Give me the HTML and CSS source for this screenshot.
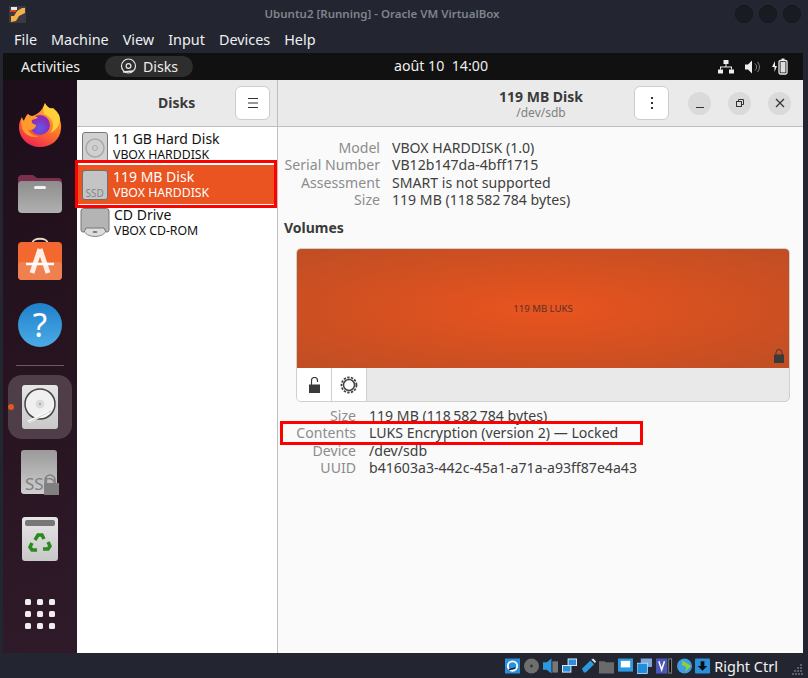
FILE: index.html
```html
<!DOCTYPE html>
<html lang="fr">
<head>
<meta charset="utf-8">
<title>Ubuntu2 [Running] - Oracle VM VirtualBox</title>
<link rel="stylesheet" href="styles.css">
</head>
<body>
<div class="vbox">
  <header class="titlebar">
    <svg class="vbox-logo" width="17" height="17" viewBox="0 0 17 17"><rect width="17" height="17" fill="#3a3a40"/><path d="M2 16l5-1 3-5 6-3V2h-3L8 5 5 10H2z" fill="#f4b04a"/><path d="M2 1h6v3H2z" fill="#e8e8e8"/><path d="M1 4h6v2H1z" fill="#d8401c"/></svg>
    <div class="titletext">Ubuntu2 [Running] - Oracle VM VirtualBox</div>
    <div class="wm"><i></i><i></i><i></i></div>
  </header>
  <nav class="menubar"><span>File</span><span>Machine</span><span>View</span><span>Input</span><span>Devices</span><span>Help</span></nav>

  <div class="guest">
    <div class="panel">
      <div class="panel-left">
        <span class="activities">Activities</span>
        <span class="pill">
          <svg width="17" height="17" viewBox="0 0 17 17" fill="none" stroke="#e8e8e8"><circle cx="8.500" cy="8" r="7" stroke-width="1.200"/><circle cx="8.500" cy="8" r="2.400" stroke-width="1.200"/><path d="M3 14l10-1" stroke-width="1.500"/></svg>
          Disks
        </span>
      </div>
      <div class="clock">août 10&nbsp;&nbsp;14:00</div>
      <div class="tray">
        <svg width="16" height="14" viewBox="0 0 16 14" fill="#eee"><rect x="5.500" y="0" width="5" height="4"/><rect x="0" y="9.500" width="5" height="4"/><rect x="11" y="9.500" width="5" height="4"/><path d="M7.500 4h1v2.500h5.500v3h-1v-2H3v2H2v-3h5.500z"/></svg>
        <svg width="16" height="14" viewBox="0 0 16 14" fill="#eee"><path d="M0 4.500h3l4-4v13l-4-4H0z"/><path d="M10 3.500c2 2 2 5 0 7M12.500 2c2.500 3 2.500 7 0 10" fill="none" stroke="#888" stroke-width="1"/></svg>
        <svg width="16" height="17" viewBox="0 0 16 17"><path d="M3 3L0 9h2.500v5L5 8H3z" fill="#eee"/><rect x="7" y="2.500" width="8" height="13.500" rx="1.500" fill="none" stroke="#eee" stroke-width="1.300"/><rect x="9.500" y="0.500" width="3" height="2" fill="#eee"/><rect x="8.500" y="4" width="5" height="10.500" fill="#ddd"/></svg>
      </div>
    </div>

    <div class="desktop">
      <aside class="dock">
        <div class="dock-item">
          <svg width="46" height="46" viewBox="0 0 46 46"><defs><linearGradient id="ff" x1="0.800" y1="0" x2="0.300" y2="1"><stop offset="0" stop-color="#ffb52e"/><stop offset="0.500" stop-color="#ff7a2a"/><stop offset="1" stop-color="#f0244f"/></linearGradient><radialGradient id="fp" cx="0.500" cy="0.650"><stop offset="0" stop-color="#5f5be8"/><stop offset="1" stop-color="#8c2bb8"/></radialGradient></defs><path d="M28 1c-1 4 0 7 3 10l5-2c6 5 9 11 8 18-1 11-10 18-21 18S2 37 2 25c0-3 1-7 3-10 0 2 1 3 2 4 1-3 2-5 4-7 1 1 2 2 4 2 4-1 10-4 13-13z" fill="url(#ff)"/><path d="M28 1c-2 4-2 7-1 11 5 2 9 6 9 11 0 3-1 6-3 8 6-2 10-8 10-14 0-4-3-8-7-11-3 1-6-1-8-5z" fill="#ffd03a"/><circle cx="23" cy="23" r="10" fill="url(#fp)"/><path d="M5 15c0 2 1 3 2 4 1-3 2-5 4-7 1 1 2 2 4 2 2 0 4 0 6 2l-6 2c-1 3 1 4 4 5 0 3-4 6-8 5 3 4 6 6 11 6-8 3-15-2-17-8-1-4-1-8 0-11z" fill="#ff9a2c"/></svg>
        </div>
        <div class="dock-item">
          <svg width="46" height="42" viewBox="0 0 46 42"><defs><linearGradient id="fold" x1="0" y1="0" x2="0" y2="1"><stop offset="0" stop-color="#8d8d8d"/><stop offset="1" stop-color="#b0b0b0"/></linearGradient></defs><path d="M1 8q0-4 4-4h11l4 3h21q4 0 4 4v8H1z" fill="#7c2f4d"/><rect x="1" y="10" width="44" height="32" rx="4" fill="url(#fold)"/><rect x="17" y="15" width="12" height="3" rx="1.500" fill="#f2f2f2"/></svg>
        </div>
        <div class="dock-item">
          <svg width="46" height="44" viewBox="0 0 46 44"><path d="M15 8C15 1 31 1 31 8" fill="none" stroke="#e9d9c0" stroke-width="2"/><rect x="1" y="6" width="44" height="38" rx="4" fill="#f2682e"/><rect x="1" y="26" width="44" height="18" fill="#ef8150" rx="4"/><path d="M23 13l-8 24M23 13l8 24" stroke="#fdeee6" stroke-width="5" fill="none"/><path d="M9 28h28" stroke="#fff" stroke-width="2.500"/></svg>
        </div>
        <div class="dock-item">
          <div class="help">?</div>
        </div>
        <div class="dock-sep"></div>
        <div class="dock-item active">
          <span class="run-dot"></span>
          <svg width="36" height="44" viewBox="0 0 36 44"><defs><linearGradient id="hd" x1="0" y1="0" x2="0" y2="1"><stop offset="0" stop-color="#e6e6e6"/><stop offset="1" stop-color="#c8c8c8"/></linearGradient></defs><rect width="36" height="44" rx="3" fill="url(#hd)"/><circle cx="18" cy="19" r="15" fill="#f0f0f0" stroke="#444" stroke-width="1.500"/><circle cx="18" cy="19" r="4.500" fill="#dcdcdc"/><circle cx="18" cy="19" r="1.200" fill="#aaa"/><path d="M6 37l21-10" stroke="#fff" stroke-width="2.500"/><path d="M5 38l24-12" stroke="#999" stroke-width="0.500"/></svg>
        </div>
        <div class="dock-item">
          <svg width="38" height="45" viewBox="0 0 38 45"><defs><linearGradient id="ssd" x1="0" y1="0" x2="0" y2="1"><stop offset="0" stop-color="#9a9a9a"/><stop offset="1" stop-color="#cfcfcf"/></linearGradient></defs><rect width="36" height="44" rx="3" fill="url(#ssd)"/><text x="4" y="40" class="ssd-big">SSD</text><path d="M24 33v-3a5 5 0 0 1 10 0v3" fill="none" stroke="#808080" stroke-width="1.500"/><rect x="23" y="33" width="15" height="12" fill="#808080"/></svg>
        </div>
        <div class="dock-item">
          <svg width="36" height="44" viewBox="0 0 36 44"><rect width="36" height="44" rx="3" fill="url(#hd)"/><rect x="3" y="3" width="30" height="6" rx="2" fill="#777"/><g fill="none" stroke="#2a8a1e" stroke-width="3.500"><path d="M13 23l3-5h4l2 4"/><path d="M26 25l2 4-2 3h-5"/><path d="M15 33h-5l-2-3 2-4"/></g></svg>
        </div>
        <div class="dock-grid"><i></i><i></i><i></i><i></i><i></i><i></i><i></i><i></i><i></i></div>
      </aside>

      <div class="window">
        <header class="headerbar">
          <div class="head-left">
            <div class="head-title">Disks</div>
            <button class="hbtn" type="button"><svg width="12" height="10" viewBox="0 0 12 10" stroke="#333"><path d="M1 .5h10M1 5h10M1 9.500h10"/></svg></button>
          </div>
          <div class="head-right">
            <div class="head-center"><div class="head-title">119 MB Disk</div><div class="head-sub">/dev/sdb</div></div>
            <button class="hbtn" type="button"><svg width="4" height="12" viewBox="0 0 4 12" fill="#333"><rect x="1" y="0" width="2" height="2"/><rect x="1" y="5" width="2" height="2"/><rect x="1" y="10" width="2" height="2"/></svg></button>
            <div class="wbtns">
              <span class="wbtn"><svg width="10" height="10" viewBox="0 0 10 10" stroke="#333"><path d="M1 9.500h8"/></svg></span>
              <span class="wbtn"><svg width="10" height="10" viewBox="0 0 10 10" fill="none" stroke="#333"><rect x="1.500" y="3.500" width="5" height="5"/><path d="M3.500 3.500v-2h5v5h-2"/></svg></span>
              <span class="wbtn"><svg width="10" height="10" viewBox="0 0 10 10" stroke="#333" stroke-width="1.200"><path d="M1 1l8 8M9 1l-8 8"/></svg></span>
            </div>
          </div>
        </header>
        <div class="content">
          <ul class="disklist">
            <li class="disk">
              <svg class="disk-icon" width="26" height="30" viewBox="0 0 26 30"><rect x="0.500" y="0.500" width="25" height="29" rx="2.500" fill="#d0d0d0" stroke="#777"/><circle cx="13" cy="16" r="9" fill="none" stroke="#aaa" stroke-width="1.500"/><circle cx="13" cy="16" r="2.500" fill="none" stroke="#aaa"/></svg>
              <div class="disk-text"><div class="disk-name">11 GB Hard Disk</div><div class="disk-model">VBOX HARDDISK</div></div>
            </li>
            <li class="disk selected">
              <svg class="disk-icon" width="26" height="30" viewBox="0 0 26 30"><rect x="0.500" y="0.500" width="25" height="29" rx="2.500" fill="#c4c4c4" stroke="#6e6e6e"/><text x="3.500" y="26.500" class="ssd-small">SSD</text></svg>
              <div class="disk-text"><div class="disk-name">119 MB Disk</div><div class="disk-model">VBOX HARDDISK</div></div>
            </li>
            <li class="disk">
              <svg class="disk-icon cd" width="30" height="29" viewBox="0 0 30 29"><ellipse cx="15" cy="22" rx="11" ry="6.500" fill="#ddd" stroke="#888"/><path d="M1 3q0-2.500 2.500-2.500h23Q29 .5 29 3v19q0 2-2 2h-1l-2-4H6l-2 4H3q-2 0-2-2z" fill="#b4b4b4" stroke="#777"/><ellipse cx="15" cy="24" rx="2.500" ry="1" fill="#777"/></svg>
              <div class="disk-text"><div class="disk-name">CD Drive</div><div class="disk-model">VBOX CD-ROM</div></div>
            </li>
          </ul>
          <main class="detail">
            <dl class="props props-disk">
              <dt>Model</dt><dd>VBOX HARDDISK (1.0)</dd>
              <dt>Serial Number</dt><dd>VB12b147da-4bff1715</dd>
              <dt>Assessment</dt><dd>SMART is not supported</dd>
              <dt>Size</dt><dd>119 MB (118&#8239;582&#8239;784 bytes)</dd>
            </dl>
            <h2 class="section">Volumes</h2>
            <section class="volumes">
              <div class="vol-map">
                <span class="vol-label">119 MB LUKS</span>
                <svg class="vol-lock" width="10" height="14" viewBox="0 0 10 14"><path d="M2 6V3.500a3 3 0 0 1 6 0V6" fill="none" stroke="#3a3a3a" stroke-width="1"/><rect y="5.500" width="10" height="8.500" fill="#3a3a3a"/></svg>
              </div>
              <div class="vol-tools">
                <span class="vol-tool"><svg width="11" height="16" viewBox="0 0 11 16"><path d="M2.500 8V3.500a3 3 0 0 1 6 0v1.500" fill="none" stroke="#3a3a3a" stroke-width="1.200"/><rect y="7.500" width="11" height="8.500" fill="#3a3a3a"/></svg></span>
                <span class="vol-tool"><svg width="18" height="18" viewBox="0 0 18 18" fill="none" stroke="#444"><circle cx="9" cy="9" r="5.500" stroke-width="1.500"/><circle cx="9" cy="9" r="7.500" stroke-width="1.800" stroke-dasharray="2.400 1.300"/></svg></span>
              </div>
            </section>
            <dl class="props props-vol">
              <dt>Size</dt><dd>119 MB (118&#8239;582&#8239;784 bytes)</dd>
              <dt>Contents</dt><dd>LUKS Encryption (version 2) — Locked</dd>
              <dt>Device</dt><dd>/dev/sdb</dd>
              <dt>UUID</dt><dd>b41603a3-442c-45a1-a71a-a93ff87e4a43</dd>
            </dl>
          </main>
        </div>
      </div>
    </div>
  </div>

  <footer class="statusbar">
    <svg width="15" height="16" viewBox="0 0 16 16"><rect width="16" height="16" fill="#2b8fdc"/><circle cx="8" cy="8" r="5" fill="none" stroke="#fff" stroke-width="2"/><path d="M4 12l7-2" stroke="#123" stroke-width="1.500"/></svg>
    <svg width="15" height="16" viewBox="0 0 16 16"><circle cx="8" cy="8" r="8" fill="#6e6e6e"/><circle cx="8" cy="8" r="1.500" fill="#333"/></svg>
    <svg width="15" height="16" viewBox="0 0 16 16"><path d="M0 4h4l5-4v16l-5-4H0z" fill="#2b9ae0"/><rect x="10" y="3" width="6" height="12" fill="#777"/></svg>
    <svg width="15" height="16" viewBox="0 0 16 16" fill="#2b8fdc" stroke="#e8f0f8"><rect x="6.500" y="0.500" width="9" height="7"/><rect x="0.500" y="7.500" width="9" height="7"/></svg>
    <svg width="15" height="16" viewBox="0 0 16 16"><path d="M1 11L10 2l4 4-9 9H3z" fill="#2b9ae0"/><path d="M11 1l2-1 3 3-1 2z" fill="#ddd"/></svg>
    <svg width="15" height="16" viewBox="0 0 16 16" fill="#6a6a6a"><path d="M0 3h6l1 1h9v12H0z"/></svg>
    <svg width="15" height="16" viewBox="0 0 16 16"><rect width="16" height="14" fill="#2b9ae0"/><rect x="3" y="2.500" width="10" height="7" fill="#fff"/></svg>
    <svg width="15" height="16" viewBox="0 0 16 16"><rect x="4" y="0" width="12" height="9" fill="#7fa6dc"/><rect x="0" y="5" width="11" height="11" fill="#1f8ee0" stroke="#dfe9f5" stroke-width="0.800"/></svg>
    <svg width="17" height="16" viewBox="0 0 18 16"><rect width="12" height="16" fill="#4a56b8"/><path d="M3 3l3 9 3-9" fill="none" stroke="#fff" stroke-width="1.600"/><rect x="13.500" y="0.500" width="3" height="15" fill="#111" stroke="#888"/></svg>
    <svg width="15" height="16" viewBox="0 0 16 16"><circle cx="8" cy="8" r="8" fill="#3f9ee0"/><path d="M6 2l9 6-6 6 1-5-5-2z" fill="#8ecf3a"/></svg>
    <svg width="15" height="16" viewBox="0 0 16 16"><rect width="16" height="16" rx="1" fill="#2b8fdc"/><path d="M6 3h4v5h3l-5 5-5-5h3z" fill="#111"/></svg>
    <span class="hostkey">Right Ctrl</span>
    <svg class="grip" width="11" height="11" viewBox="0 0 11 11" fill="#5a5e68"><rect x="8" y="0" width="2" height="2"/><rect x="5" y="3" width="2" height="2"/><rect x="8" y="3" width="2" height="2"/><rect x="2" y="6" width="2" height="2"/><rect x="5" y="6" width="2" height="2"/><rect x="8" y="6" width="2" height="2"/><rect x="0" y="9" width="2" height="2"/><rect x="3" y="9" width="2" height="2"/><rect x="6" y="9" width="2" height="2"/><rect x="9" y="9" width="2" height="2"/></svg>
  </footer>
</div>
<div class="callout callout-disk"></div>
<div class="callout callout-contents"></div>
</body>
</html>
```
FILE: styles.css
```css
* { box-sizing: border-box; }
html, body { margin: 0; padding: 0; }
body { width: 808px; height: 678px; overflow: hidden; position: relative; background: #232630; font-family: "Noto Sans", sans-serif; }
.vbox { width: 808px; height: 678px; display: flex; flex-direction: column; }

.titlebar { height: 30px; display: flex; align-items: center; padding: 0 7px 0 9px; position: relative; flex: none; }
.vbox-logo { margin-top: -2px; }
.titletext { position: absolute; left: 0; width: 764px; top: 6px; text-align: center; font-size: 11.500px; font-weight: 600; color: #80848c; line-height: 16px; }
.wm { margin-left: auto; display: flex; gap: 6px; margin-top: -2px; }
.wm i { width: 18px; height: 18px; border-radius: 50%; background: #191b22; border: 1px solid #14161b; }

.menubar { height: 23px; flex: none; display: flex; gap: 14px; padding-left: 14px; color: #eef0f2; font-size: 14.400px; line-height: 20px; }

.guest { flex: 1; margin: 0 5px 0 3px; display: flex; flex-direction: column; min-height: 0; }
.panel { height: 27px; flex: none; background: #111; color: #eee; font-size: 14.200px; position: relative; display: flex; align-items: center; justify-content: space-between; }
.panel-left { display: flex; align-items: center; }
.activities { margin-left: 18px; width: 62px; white-space: nowrap; }
.pill { margin-left: 22px; height: 21px; width: 88px; border-radius: 11px; background: #2e2e2e; display: flex; align-items: center; justify-content: center; gap: 6px; }
.clock { position: absolute; left: 391px; top: 4px; line-height: 18px; }
.tray { display: flex; align-items: center; gap: 11px; margin-right: 15px; }

.desktop { flex: 1; display: flex; min-height: 0; }
.dock { width: 74px; flex: none; background: linear-gradient(160deg, #1d0d1b 0%, #26131f 45%, #2f1a29 100%); display: flex; flex-direction: column; align-items: center; padding-top: 13px; position: relative; }
.dock-item { width: 64px; height: 64px; margin-bottom: 2.670px; border-radius: 14px; display: flex; align-items: center; justify-content: center; position: relative; flex: none; }
.dock-item.active { background: #4f3d47; margin-bottom: 2px; }
.dock-item.active ~ .dock-item { margin-bottom: 2px; }
.run-dot { position: absolute; left: 0; top: 29px; width: 6px; height: 6px; border-radius: 50%; background: #e95420; }
.help { width: 44px; height: 44px; border-radius: 50%; background: linear-gradient(#1f80cc, #4aace6); color: #fff; font-size: 33px; line-height: 44px; text-align: center; }
.dock-sep { width: 48px; height: 1px; background: #6a5a66; margin: 5px 0 9px; flex: none; }
.ssd-big { font-size: 17px; fill: #808080; }
.ssd-small { font-size: 10px; fill: #848484; }
.dock-grid { margin-top: 26px; display: grid; grid-template-columns: repeat(3, 6px); gap: 6px; }
.dock-grid i { width: 6px; height: 6px; border-radius: 1.500px; background: #eee; }

.window { flex: 1; display: flex; flex-direction: column; min-width: 0; background: #fff; color: #2e2e2e; }
.headerbar { height: 47px; flex: none; background: #eaeaea; border-bottom: 1px solid #bfbfbf; display: flex; }
.head-left { width: 201px; flex: none; border-right: 1px solid #bfbfbf; display: flex; align-items: center; justify-content: flex-end; padding-right: 7px; position: relative; }
.head-left .head-title { position: absolute; left: 81px; top: 14px; }
.head-right { flex: 1; display: flex; align-items: center; padding-right: 12px; }
.head-center { width: 356px; padding-left: 170px; text-align: center; line-height: 15px; }
.head-title { font-size: 14px; font-weight: 700; color: #3a3a3a; line-height: 18px; }
.head-sub { font-size: 12px; color: #808080; line-height: 13px; }
.hbtn { width: 35px; height: 34px; padding: 0; background: #fff; border: 1px solid #cdcdcd; border-radius: 6px; display: flex; align-items: center; justify-content: center; }
.wbtns { margin-left: auto; display: flex; gap: 17px; }
.wbtn { width: 23px; height: 23px; border-radius: 50%; background: #dadada; display: flex; align-items: center; justify-content: center; }

.content { flex: 1; display: flex; min-height: 0; }
.disklist { width: 201px; flex: none; margin: 0; padding: 0; list-style: none; background: #fff; border-right: 1px solid #bfbfbf; }
.disk { height: 38px; display: flex; align-items: center; gap: 5px; padding-left: 5px; color: #111; }
.disk-icon { flex: none; margin-top: 1px; }
.disk-icon.cd { margin-left: -2px; margin-right: -1px; }
.disk-text { padding-top: 2px; }
.disk-name { font-size: 14px; line-height: 16px; }
.disk-model { font-size: 12.300px; line-height: 16px; }
.disk.selected { background: #e95420; color: #fff; height: 39px; margin-bottom: -1px; }
.disk.selected .disk-text { padding-top: 1px; }

.detail { flex: 1; background: #fafafa; padding: 12px 0 0 6px; min-width: 0; }
.props { margin: 0; display: grid; grid-template-columns: 96px auto; column-gap: 12px; font-size: 14.100px; line-height: 17.300px; justify-content: start; }
.props dt { text-align: right; color: #8c8c8c; white-space: nowrap; }
.props dd { margin: 0; color: #404040; white-space: nowrap; }
.section { margin: 11px 0 11px; font-size: 14px; line-height: 18px; font-weight: 700; color: #3a3a3a; }
.volumes { margin: 0 13px 0 12px; border: 1px solid #cfcfcf; border-radius: 5px; background: #e9e9e9; overflow: hidden; }
.vol-map { height: 119px; margin-right: 0; background: radial-gradient(ellipse farthest-corner at 50% 50%, #e95420 0%, #d85120 40%, #bf4e24 100%); position: relative; display: flex; align-items: center; justify-content: center; }
.vol-label { font-size: 9.600px; color: #5a3222; }
.vol-lock { position: absolute; right: 5px; bottom: 5px; }
.vol-tools { height: 33px; display: flex; }
.vol-tool { width: 35px; background: #fff; border-right: 1px solid #cfcfcf; display: flex; align-items: center; justify-content: center; }
.props-vol { margin-top: 5px; grid-template-columns: 72px auto; column-gap: 13px; }

.statusbar { height: 25px; flex: none; display: flex; align-items: center; justify-content: flex-end; gap: 3.800px; padding-right: 30px; position: relative; }
.hostkey { margin-left: 0; font-size: 14.500px; color: #f0f2f4; }
.grip { position: absolute; right: 5px; bottom: 3px; }

.callout { position: absolute; border: 3px solid #f00; }
.callout-disk { left: 75px; top: 160px; width: 202px; height: 48px; }
.callout-contents { left: 280px; top: 421px; width: 363px; height: 24px; }
```
